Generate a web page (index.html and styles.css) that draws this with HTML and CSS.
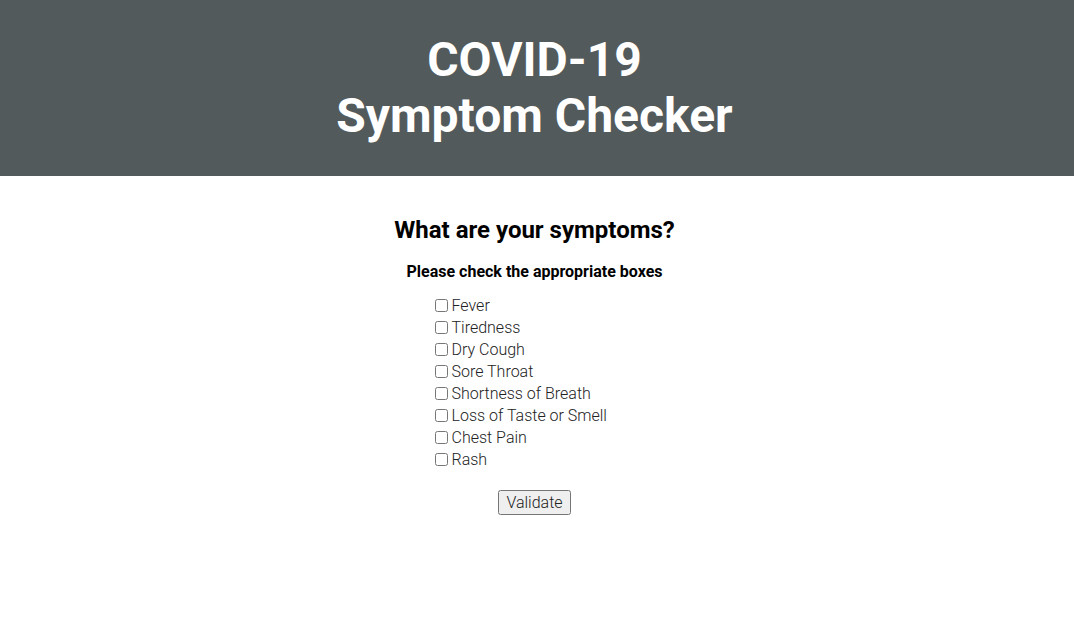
FILE: index.html
```html
<!DOCTYPE html>
<html>
<head>
<meta charset="utf-8">
<link rel="stylesheet" href="styles.css">
</head>
<body>
<header class="banner">
  <h1 class="title">COVID-19<br>Symptom Checker</h1>
</header>
<main class="main">
  <h2 class="question">What are your symptoms?</h2>
  <h3 class="hint">Please check the appropriate boxes</h3>
  <form class="form">
    <div class="list">
      <label class="item"><input type="checkbox"> Fever</label>
      <label class="item"><input type="checkbox"> Tiredness</label>
      <label class="item"><input type="checkbox"> Dry Cough</label>
      <label class="item"><input type="checkbox"> Sore Throat</label>
      <label class="item"><input type="checkbox"> Shortness of Breath</label>
      <label class="item"><input type="checkbox"> Loss of Taste or Smell</label>
      <label class="item"><input type="checkbox"> Chest Pain</label>
      <label class="item"><input type="checkbox"> Rash</label>
    </div>
    <button type="button" class="btn">Validate</button>
  </form>
</main>
</body>
</html>
```
FILE: styles.css
```css
html, body {
  margin: 0;
  padding: 0;
  background: #fff;
  font-family: Roboto, "Liberation Sans", sans-serif;
  color: #000;
}
.banner {
  background: #535a5b;
  padding: 32px 5px 32px 0;
  text-align: center;
}
.title {
  margin: 0;
  font-size: 48px;
  font-weight: 700;
  line-height: 56px;
  color: #fff;
}
.main {
  display: flex;
  flex-direction: column;
  align-items: center;
  padding-right: 5px;
}
.question {
  margin: 40px 0 0;
  font-size: 24px;
  font-weight: 700;
  line-height: 28px;
}
.hint {
  margin: 18px 0 0;
  font-size: 16px;
  font-weight: 700;
  line-height: 19px;
}
.form {
  display: flex;
  flex-direction: column;
  align-items: center;
  margin-top: 13px;
}
.list {
  display: flex;
  flex-direction: column;
  width: 200px;
}
.item {
  display: flex;
  align-items: center;
  gap: 4px;
  height: 22px;
  font-size: 16px;
  font-weight: 300;
  color: #222;
}
.item input {
  margin: 0;
  width: 13px;
  height: 13px;
}
.btn {
  margin-top: 20px;
  font-family: Roboto, "Liberation Sans", sans-serif;
  font-weight: 300;
  font-size: 16px;
  padding: 1px 6px;
  color: #222;
}
```
